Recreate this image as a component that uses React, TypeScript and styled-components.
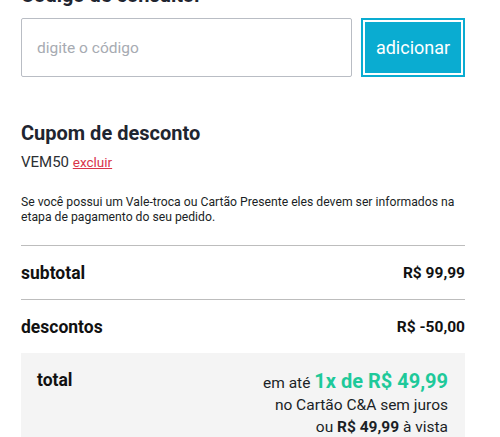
import React from "react";
import styled, { createGlobalStyle } from "styled-components";

const GlobalStyle = createGlobalStyle`
  body {
    margin: 0;
    background: #fff;
    font-family: Roboto, "Liberation Sans", Arial, sans-serif;
    overflow: hidden;
  }
`;

const App: React.FC = () => {
  return (
    <>
      <GlobalStyle />
      <Wrapper>
        <SectionTitle $top={-17}>Código de consultor</SectionTitle>
        <CodeForm>
          <CodeInput placeholder="digite o código" />
          <AddButton>adicionar</AddButton>
        </CodeForm>

        <SectionTitle $top={44}>Cupom de desconto</SectionTitle>
        <Coupon>
          VEM50 <RemoveLink href="#">excluir</RemoveLink>
        </Coupon>

        <Notice>
          Se você possui um Vale-troca ou Cartão Presente eles devem ser informados na
          etapa de pagamento do seu pedido.
        </Notice>

        <SummaryRow>
          <span>subtotal</span>
          <span>R$ 99,99</span>
        </SummaryRow>
        <SummaryRow>
          <span>descontos</span>
          <span>R$ -50,00</span>
        </SummaryRow>

        <TotalBox>
          <TotalLabel>total</TotalLabel>
          <TotalInfo>
            <div>
              em até <Installment>1x de R$ 49,99</Installment>
            </div>
            <div>no Cartão C&amp;A sem juros</div>
            <div>
              ou <strong>R$ 49,99</strong> à vista
            </div>
          </TotalInfo>
        </TotalBox>
      </Wrapper>
    </>
  );
};

export default App;

// Styled components
const Wrapper = styled.div`
  width: 444px;
  margin: 0 0 0 21px;
  color: #1b1f26;
`;

const SectionTitle = styled.h2<{ $top: number }>`
  margin: ${(p) => p.$top}px 0 0 0;
  font-size: 20px;
  line-height: 24px;
  font-weight: 700;
  color: #1f2530;
`;

const CodeForm = styled.div`
  display: flex;
  gap: 9px;
  margin-top: 11px;
`;

const CodeInput = styled.input`
  flex: 1;
  height: 59px;
  box-sizing: border-box;
  border: 1px solid #b9bdc4;
  border-radius: 2px;
  padding: 0 15px;
  font-family: inherit;
  font-size: 15.5px;
  color: #333;
  outline: none;

  &::placeholder {
    color: #a7abb2;
  }
`;

const AddButton = styled.button`
  width: 104px;
  height: 59px;
  border: none;
  background: #0aacd1;
  box-shadow: inset 0 0 0 2px #0aacd1, inset 0 0 0 4px #fff;
  color: #fff;
  font-family: inherit;
  font-size: 18px;
  cursor: pointer;
`;

const Coupon = styled.div`
  margin-top: 8px;
  font-size: 15px;
  color: #2c2f33;
`;

const RemoveLink = styled.a`
  color: #d9344a;
  font-size: 13.5px;
`;

const Notice = styled.p`
  margin: 24px 0 0 0;
  font-size: 12.2px;
  line-height: 15px;
  color: #1b1f26;
  padding-bottom: 20px;
`;

const SummaryRow = styled.div`
  display: flex;
  justify-content: space-between;
  align-items: center;
  height: 53px;
  font-size: 17.5px;
  font-weight: 700;
  color: #111;
  border-top: 1px solid #bdbdbd;

  & > span:last-child {
    font-size: 15.5px;
  }
`;

const TotalBox = styled.div`
  display: flex;
  justify-content: space-between;
  background: #f4f4f4;
  padding: 17px 17px 12px 16px;
`;

const TotalLabel = styled.div`
  font-size: 17.5px;
  font-weight: 700;
  color: #111;
`;

const TotalInfo = styled.div`
  text-align: right;
  font-size: 15.5px;
  line-height: 22px;
  color: #1b1f26;

  strong {
    font-weight: 700;
  }
`;

const Installment = styled.span`
  color: #1ec99a;
  font-size: 20px;
  font-weight: 700;
`;
